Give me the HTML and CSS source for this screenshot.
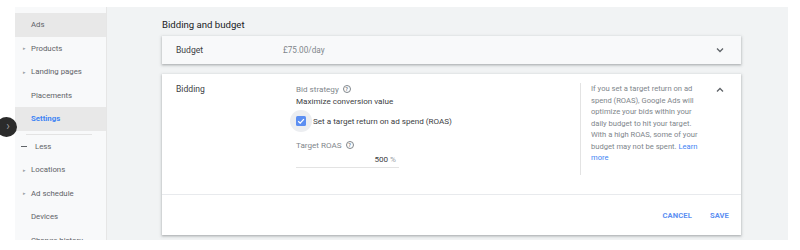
FILE: index.html
```html
<html>
<head>
<link rel="stylesheet" href="styles.css">
<title>Campaign settings</title>
</head>
<body>
    <div class="page">
        <div class="sidebar">
            <div class="navItem selectedGrey"><span class="marker"></span>Ads</div>
            <div class="navItem"><span class="marker">&#9656;</span>Products</div>
            <div class="navItem"><span class="marker">&#9656;</span>Landing pages</div>
            <div class="navItem"><span class="marker"></span>Placements</div>
            <div class="navItem selectedGrey active"><span class="marker"></span>Settings</div>
            <div class="navRule"></div>
            <div class="navItem less"><span class="dash"></span>Less</div>
            <div class="navItem"><span class="marker">&#9656;</span>Locations</div>
            <div class="navItem"><span class="marker">&#9656;</span>Ad schedule</div>
            <div class="navItem"><span class="marker"></span>Devices</div>
            <div class="navItem"><span class="marker"></span>Change history</div>
        </div>
        <div class="collapseDot">&#8250;</div>
        <div class="main">
            <div class="sectionTitle">Bidding and budget</div>
            <div class="card collapsed">
                <div class="cardLabel">Budget</div>
                <div class="cardValue">£75.00/day</div>
                <svg class="chevron" width="8" height="6" viewBox="0 0 8 6">
                    <path d="M1 1.5 L4 4.5 L7 1.5" fill="none" stroke="#5f6368" stroke-width="1.3"/>
                </svg>
            </div>
            <div class="card expanded">
                <div class="cardBody">
                    <div class="cardLabel wideLabel">Bidding</div>
                    <div class="fields">
                        <div class="fieldLabel">Bid strategy <span class="help">?</span></div>
                        <div class="fieldValue">Maximize conversion value</div>
                        <div class="checkRow">
                            <span class="halo"><span class="checkbox">
                                <svg width="10" height="10" viewBox="0 0 10 10">
                                    <path d="M2.2 5.2 L4.2 7.1 L7.9 3.1" fill="none" stroke="white" stroke-width="1.3"/>
                                </svg>
                            </span></span>
                            <span>Set a target return on ad spend (ROAS)</span>
                        </div>
                        <div class="fieldLabel roasLabel">Target ROAS <span class="help">?</span></div>
                        <div class="roasInput"><span class="roasNumber">500</span> <span class="percent">%</span></div>
                    </div>
                    <div class="helpText">
                        If you set a target return on ad spend (ROAS), Google Ads will optimize your bids within your daily budget to hit your target. With a high ROAS, some of your budget may not be spent. <span class="link">Learn more</span>
                    </div>
                    <svg class="chevron up" width="8" height="6" viewBox="0 0 8 6">
                        <path d="M1 4.5 L4 1.5 L7 4.5" fill="none" stroke="#5f6368" stroke-width="1.3"/>
                    </svg>
                </div>
                <div class="cardFooter">
                    <span class="textButton">CANCEL</span>
                    <span class="textButton">SAVE</span>
                </div>
            </div>
        </div>
    </div>
</body>
</html>
```

FILE: styles.css
```css
body {margin: 0;
      background-color: white;
      font-family: Roboto, "Liberation Sans", sans-serif;
      color: #202124;
      overflow: hidden}
.page {display: flex;
       margin-top: 7px;
       height: 233px;
       width: 788px;
       overflow: hidden;
       position: relative}
.sidebar {margin-left: 15px;
          width: 91px;
          flex-shrink: 0;
          padding-top: 6px;
          background-color: #f8f9fa;
          border-right: 1px solid #e6e6e6;
          font-size: 7.8px;
          color: #5f6368}
.navItem {height: 23.5px;
          display: flex;
          align-items: center;
          padding-left: 8px;
          white-space: nowrap}
.marker {width: 8px;
         font-size: 5px;
         color: #9aa0a6}
.selectedGrey {background-color: #e8e8e8}
.active {color: #4285f4;
         font-weight: bold}
.navRule {height: 1px;
          margin: 3px 14px 0 11px;
          background-color: #e3e3e3}
.less {padding-left: 6px}
.dash {width: 6px;
       height: 1.5px;
       background-color: #5f6368;
       margin-right: 8px}
.collapseDot {position: absolute;
              left: -4px;
              top: 110px;
              width: 21px;
              height: 20px;
              border-radius: 50%;
              background-color: #2b2b2b;
              color: #9a9a9a;
              font-size: 12px;
              line-height: 18px;
              text-align: center;
              text-indent: 3px}
.main {flex-grow: 1;
       background-color: #f1f3f4;
       padding: 0 47px 0 55px}
.sectionTitle {font-size: 9.6px;
               line-height: 14px;
               margin-top: 11px;
               margin-bottom: 4px}
.card {background-color: white;
       box-shadow: 0 1px 2px rgba(60,64,67,0.3), 0 1px 3px 1px rgba(60,64,67,0.12)}
.collapsed {height: 28px;
            display: flex;
            align-items: center;
            background-color: #f8f9fa}
.cardLabel {width: 107px;
            padding-left: 14px;
            flex-shrink: 0;
            font-size: 8.6px;
            line-height: 12px;
            color: #3c4043}
.wideLabel {width: 120px}
.cardValue {flex-grow: 1;
            font-size: 8.2px;
            color: #80868b}
.chevron {margin-right: 17px}
.expanded {margin-top: 10px}
.cardBody {display: flex;
           height: 120px;
           padding-top: 9px;
           box-sizing: border-box}
.fields {width: 284px;
         flex-shrink: 0;
         font-size: 8.1px}
.fieldLabel {line-height: 12px;
             color: #80868b}
.fieldValue {line-height: 12px;
             color: #3c4043}
.help {display: inline-block;
       width: 6px;
       height: 6px;
       border: 1px solid #80868b;
       border-radius: 50%;
       font-size: 5.5px;
       line-height: 6px;
       text-align: center;
       vertical-align: 1px;
       margin-left: 2px;
       font-weight: bold}
.checkRow {display: flex;
           align-items: center;
           margin-top: 3px;
           margin-left: -6px;
           height: 22px;
           color: #3c4043}
.halo {width: 22px;
       height: 22px;
       border-radius: 50%;
       background-color: #eceef1;
       display: flex;
       align-items: center;
       justify-content: center;
       margin-right: 1px}
.checkbox {width: 10px;
           height: 10px;
           border-radius: 1.5px;
           background-color: #5c8ff2;
           display: flex}
.roasLabel {margin-top: 7px}
.roasInput {width: 100px;
            text-align: right;
            padding-right: 3px;
            line-height: 12px;
            padding-top: 2px;
            padding-bottom: 2px;
            border-bottom: 1px solid #e3e3e3;
            color: #3c4043}
.percent {color: #9aa0a6}
.helpText {width: 123px;
           height: 92px;
           box-sizing: border-box;
           border-left: 1px solid #e3e3e3;
           padding-left: 10px;
           font-size: 7.6px;
           line-height: 11.5px;
           color: #80868b;
           flex-shrink: 0}
.link {color: #4285f4}
.up {margin-left: 13px;
     margin-top: 4px}
.cardFooter {height: 40px;
             border-top: 1px solid #e8eaed;
             display: flex;
             justify-content: flex-end;
             align-items: center;
             gap: 18px;
             padding-right: 12px}
.textButton {font-size: 7.6px;
             font-weight: bold;
             color: #5c8ff2;
             letter-spacing: 0.1px}
```
